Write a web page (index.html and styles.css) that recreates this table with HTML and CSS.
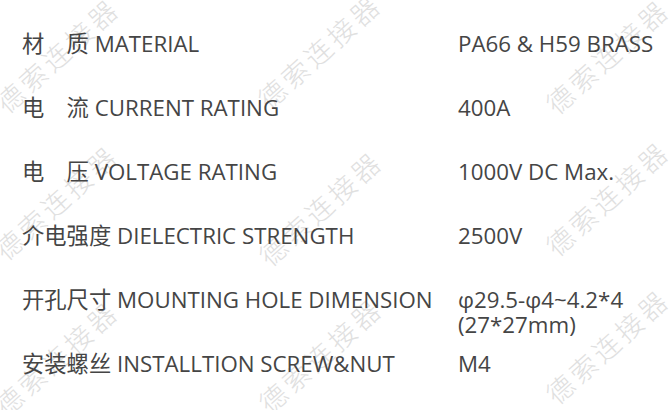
FILE: index.html
```html
<!DOCTYPE html>
<html lang="zh">
<head>
<meta charset="utf-8">
<title>Specs</title>
<link rel="stylesheet" href="styles.css">
</head>
<body>
<div class="page">
  <div class="watermarks" aria-hidden="true">
    <span class="wm wm-a1">德索连接器</span>
    <span class="wm wm-b1">德索连接器</span>
    <span class="wm wm-c1">德索连接器</span>
    <span class="wm wm-a2">德索连接器</span>
    <span class="wm wm-b2">德索连接器</span>
    <span class="wm wm-c2">德索连接器</span>
    <span class="wm wm-a3">德索连接器</span>
    <span class="wm wm-b3">德索连接器</span>
    <span class="wm wm-c3">德索连接器</span>
  </div>
  <div class="specs">
    <div class="row"><div class="label">材　质 MATERIAL</div><div class="value">PA66 &amp; H59 BRASS</div></div>
    <div class="row"><div class="label">电　流 CURRENT RATING</div><div class="value">400A</div></div>
    <div class="row"><div class="label">电　压 VOLTAGE RATING</div><div class="value">1000V DC Max.</div></div>
    <div class="row"><div class="label">介电强度 DIELECTRIC STRENGTH</div><div class="value">2500V</div></div>
    <div class="row"><div class="label">开孔尺寸 MOUNTING HOLE DIMENSION</div><div class="value">φ29.5-φ4~4.2*4<br>(27*27mm)</div></div>
    <div class="row"><div class="label">安装螺丝 INSTALLTION SCREW&amp;NUT</div><div class="value">M4</div></div>
  </div>
</div>
</body>
</html>
```
FILE: styles.css
```css
html, body {
  margin: 0;
  padding: 0;
  background: #ffffff;
}

.page {
  position: relative;
  width: 669px;
  height: 410px;
  overflow: hidden;
}

.specs {
  position: relative;
  padding: 31px 0 0 22px;
  font-family: "Open Sans", "Noto Sans CJK SC", sans-serif;
  font-size: 22.3px;
  line-height: 25px;
  color: #454545;
}

.row {
  display: grid;
  grid-template-columns: 436px 1fr;
  height: 64px;
}

.label,
.value {
  white-space: nowrap;
}

.watermarks {
  position: absolute;
  inset: 0;
  pointer-events: none;
}

.wm {
  position: absolute;
  font-family: "Noto Sans CJK SC", sans-serif;
  font-weight: 300;
  font-size: 27px;
  line-height: 27px;
  letter-spacing: 4px;
  color: #e0e0e0;
  white-space: nowrap;
  transform-origin: 13.5px 50%;
  transform: rotate(-42deg);
}

.wm-a1 { left: -4px;  top: 84px; }
.wm-b1 { left: 258px; top: 80px; }
.wm-c1 { left: 546px; top: 85px; }
.wm-a2 { left: -5px;  top: 231px; }
.wm-b2 { left: 259px; top: 237px; }
.wm-c2 { left: 546px; top: 227px; }
.wm-a3 { left: -5px;  top: 387px; }
.wm-b3 { left: 259px; top: 384px; }
.wm-c3 { left: 546px; top: 375px; }
```
